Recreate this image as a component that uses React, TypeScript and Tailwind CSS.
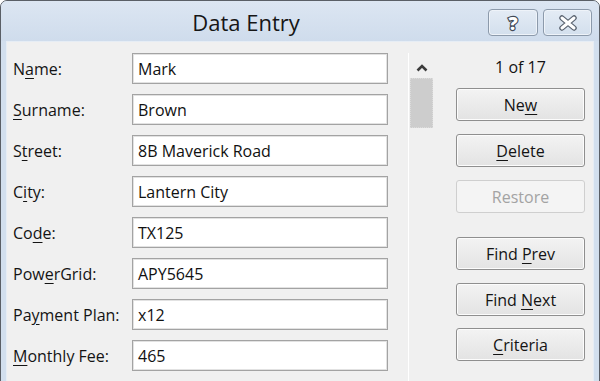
import React from "react";

type L = { pre: string; u: string; post: string; value: string };

const rows: L[] = [
  { pre: "N", u: "a", post: "me:", value: "Mark" },
  { pre: "", u: "S", post: "urname:", value: "Brown" },
  { pre: "S", u: "t", post: "reet:", value: "8B Maverick Road" },
  { pre: "C", u: "i", post: "ty:", value: "Lantern City" },
  { pre: "Co", u: "d", post: "e:", value: "TX125" },
  { pre: "Pow", u: "e", post: "rGrid:", value: "APY5645" },
  { pre: "Pa", u: "y", post: "ment Plan:", value: "x12" },
  { pre: "", u: "M", post: "onthly Fee:", value: "465" },
];

function Btn({
  pre,
  u,
  post,
  disabled,
  className = "",
}: {
  pre: string;
  u: string;
  post: string;
  disabled?: boolean;
  className?: string;
}) {
  return (
    <div
      className={
        "w-[129px] h-[33px] rounded-[3px] border flex items-center justify-center text-[16px] " +
        (disabled
          ? "border-[#cfcfcf] bg-[#f4f4f4] text-[#a3a3a3] "
          : "border-[#8f8f8f] bg-gradient-to-b from-[#f3f3f3] to-[#e3e3e3] text-[#141414] shadow-[inset_0_0_0_1px_#fcfcfc] ") +
        className
      }
    >
      <span>
        {pre}
        {u && <span className="underline underline-offset-[3px]">{u}</span>}
        {post}
      </span>
    </div>
  );
}

export default function App() {
  return (
    <div className="w-[600px] h-[381px] overflow-hidden bg-white font-['Open_Sans','Noto_Sans',sans-serif]">
      <div className="w-[600px] h-[420px] rounded-t-[7px] border border-[#5a5f66] bg-[#d2dfee] flex flex-col">
        {/* title bar */}
        <div className="h-[40px] relative flex items-center justify-center bg-gradient-to-b from-[#dce6f2] to-[#cfdcec] rounded-t-[6px]">
          <span className="text-[22px] text-[#161616] ml-[-108px] mt-[2px]">Data Entry</span>
          <div className="absolute right-[7px] top-[8px] flex gap-[5px]">
            <div className="w-[50px] h-[27px] rounded-[4px] border border-[#8c9aab] bg-gradient-to-b from-[#e4ecf5] to-[#d3dfed] shadow-[inset_0_0_0_1px_#eef3f9] flex items-center justify-center">
              <span className="text-[18px] font-extrabold text-white leading-none [-webkit-text-stroke:2.4px_#434b57] [paint-order:stroke_fill]">
                ?
              </span>
            </div>
            <div className="w-[49px] h-[27px] rounded-[4px] border border-[#8c9aab] bg-gradient-to-b from-[#e4ecf5] to-[#d3dfed] shadow-[inset_0_0_0_1px_#eef3f9] flex items-center justify-center">
              <svg width="20" height="16" viewBox="0 0 20 16">
                <path d="M4 3 L16 13 M16 3 L4 13" stroke="#5a6370" strokeWidth="5.5" strokeLinecap="round" />
                <path d="M4 3 L16 13 M16 3 L4 13" stroke="#ffffff" strokeWidth="3" strokeLinecap="round" />
              </svg>
            </div>
          </div>
        </div>
        {/* content */}
        <div className="flex-1 mx-[5px] border-l border-r border-t border-[#e6edf5] bg-[#f0f0f0] flex">
          {/* fields */}
          <div className="pl-[6px] pt-[11px] flex flex-col gap-[10px]">
            {rows.map((r, i) => (
              <div key={i} className="flex items-center h-[31px]">
                <div className="w-[119px] text-[16px] text-[#141414] whitespace-nowrap">
                  {r.pre}
                  <span className="underline underline-offset-[3px]">{r.u}</span>
                  {r.post}
                </div>
                <div className="w-[256px] h-[31px] border border-[#a3a3a3] bg-white shadow-[inset_0_0_0_1px_#e2e2e2] flex items-center pl-[5px] text-[16px] text-[#111]">
                  {r.value}
                </div>
              </div>
            ))}
          </div>
          {/* scrollbar */}
          <div className="ml-[20px] mt-[11px] w-[26px] border-l border-white flex flex-col items-center">
            <svg width="12" height="9" viewBox="0 0 12 9" className="mt-[10px]">
              <path d="M1.5 7.5 L6 3 L10.5 7.5" stroke="#3c3c3c" strokeWidth="2.6" fill="none" />
            </svg>
            <div className="mt-[6px] w-[23px] h-[50px] bg-[#cdcdcd] border border-dotted border-[#dcdcdc]" />
          </div>
          {/* buttons */}
          <div className="ml-[22px] pt-[14px] flex flex-col items-center">
            <div className="text-[16px] text-[#141414] h-[22px] leading-[22px]">1 of 17</div>
            <Btn pre="Ne" u="w" post="" className="mt-[10px]" />
            <Btn pre="" u="D" post="elete" className="mt-[13px]" />
            <Btn pre="Restore" u="" post="" disabled className="mt-[13px]" />
            <Btn pre="Find " u="P" post="rev" className="mt-[24px]" />
            <Btn pre="Find " u="N" post="ext" className="mt-[13px]" />
            <Btn pre="" u="C" post="riteria" className="mt-[12px]" />
          </div>
        </div>
      </div>
    </div>
  );
}
